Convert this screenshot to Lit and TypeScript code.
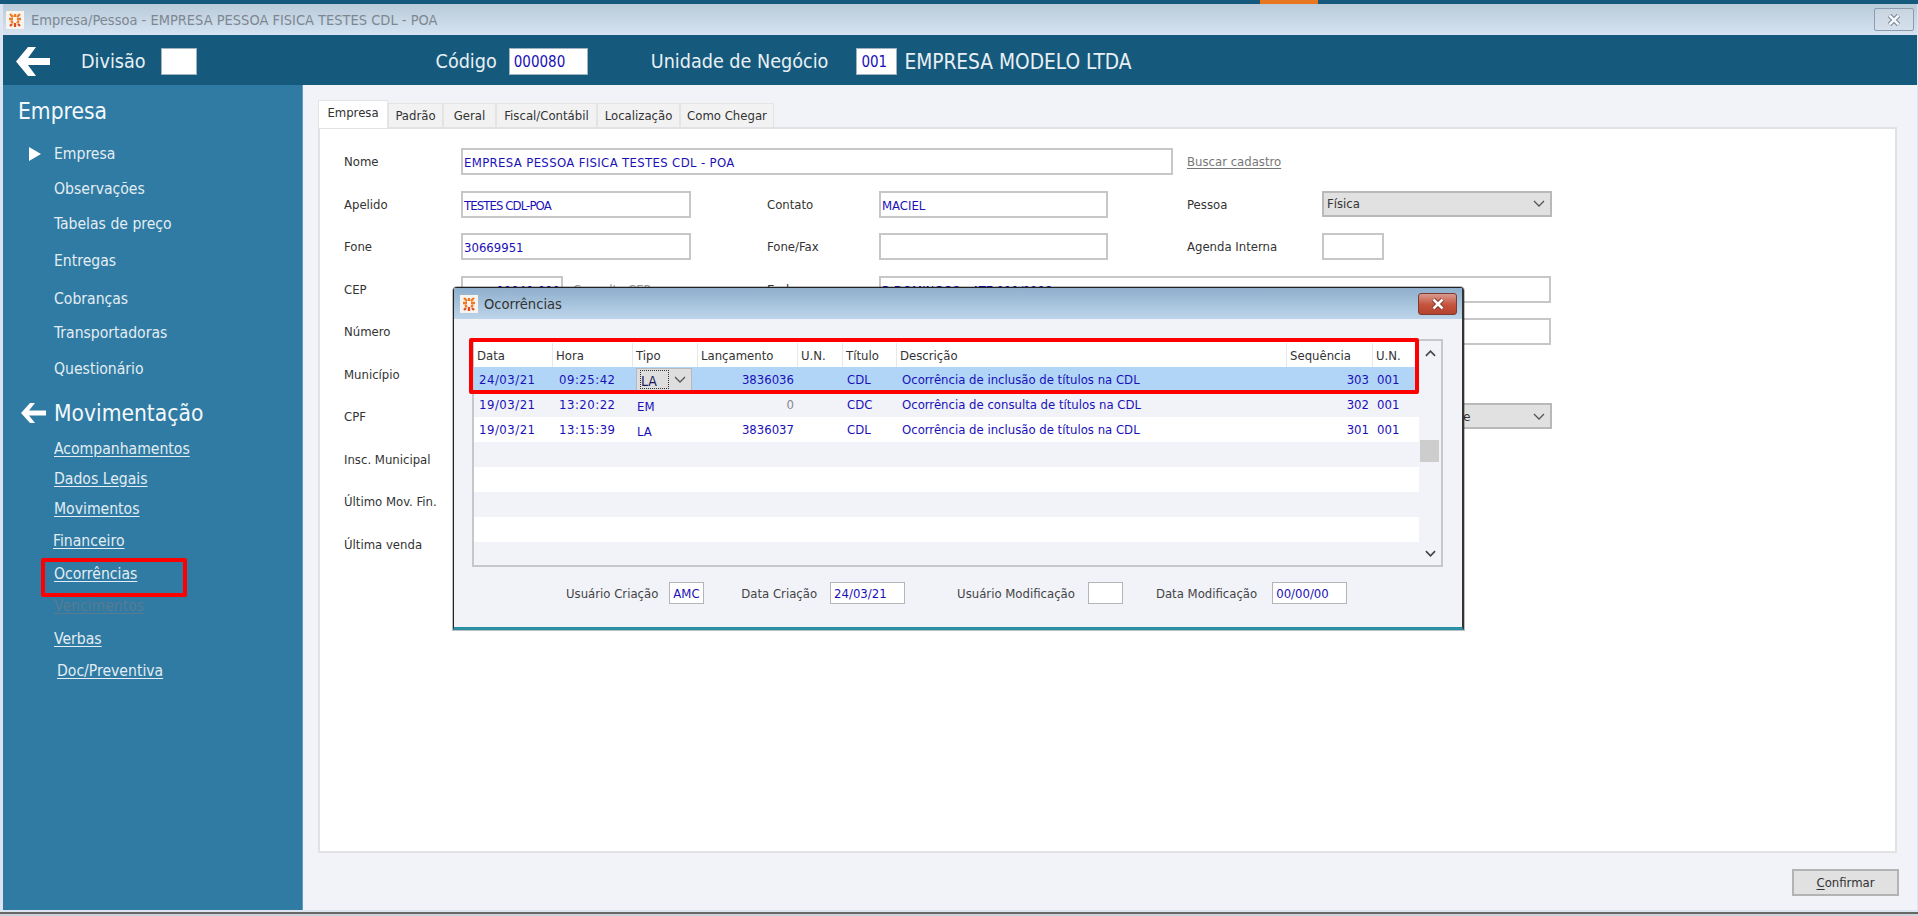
import { LitElement, html, css, svg } from "lit";
import { customElement } from "lit/decorators.js";

// small orange company mark used in both title bars
const appIcon = svg`<svg viewBox="0 0 18 18" width="18" height="18">
  <rect width="18" height="18" fill="#f7f3ee"/>
  <path d="M4 3l3 3M9 3v3M14 3l-3 3M3 8h4M11 8h4M5 10l2 2M13 10l-2 2" stroke="#ee7a26" stroke-width="2.3" fill="none"/>
  <path d="M4 15l2-2M9 12v4M14 15l-2-2" stroke="#dc4f1c" stroke-width="2.3" fill="none"/>
</svg>`;

const chevronDown = svg`<svg viewBox="0 0 12 7" width="12" height="7"><path d="M1 1l5 5 5-5" fill="none" stroke="#555" stroke-width="1.3"/></svg>`;

const closeX = (color: string, edge: string) => svg`<svg viewBox="0 0 14 12" width="14" height="12">
  <path d="M2.5 1.5l9 9M11.5 1.5l-9 9" stroke="${edge}" stroke-width="4.4" fill="none"/>
  <path d="M2.5 1.5l9 9M11.5 1.5l-9 9" stroke="${color}" stroke-width="2.6" fill="none"/>
</svg>`;

const bigArrow = svg`<svg viewBox="0 0 34 29" width="34" height="29"><path d="M12 0h8L12 11h22v7H12l8 11h-8L0 14.5z" fill="#fff"/></svg>`;
const smallArrow = svg`<svg viewBox="0 0 25 20" width="25" height="20"><path d="M9 0h5L8 7.5h17v5H8l6 7.5H9L0 10z" fill="#fff"/></svg>`;
const playArrow = svg`<svg viewBox="0 0 12 14" width="12" height="14"><path d="M0 0l12 7-12 7z" fill="#fff"/></svg>`;

// label, gap above the item
const TOP_MENU: [string, number][] = [
  ["Observações", 15],
  ["Tabelas de preço", 15],
  ["Entregas", 17],
  ["Cobranças", 18],
  ["Transportadoras", 14],
  ["Questionário", 16],
];

// label, gap above, left offset
const LINK_MENU: [string, number, number, string][] = [
  ["Acompanhamentos", 11, 51, ""],
  ["Dados Legais", 10, 51, ""],
  ["Movimentos", 10, 51, ""],
  ["Financeiro", 12, 50, ""],
  ["Ocorrências", 13, 51, ""],
  ["Vencimentos", 12, 51, "off"],
  ["Verbas", 13, 51, ""],
  ["Doc/Preventiva", 12, 54, ""],
];

const COLUMNS = [
  { title: "Data", w: 79 },
  { title: "Hora", w: 80 },
  { title: "Tipo", w: 65 },
  { title: "Lançamento", w: 100 },
  { title: "U.N.", w: 45 },
  { title: "Título", w: 54 },
  { title: "Descrição", w: 390 },
  { title: "Sequência", w: 86 },
  { title: "U.N.", w: 46 },
];

const ROWS = [
  ["24/03/21", "09:25:42", "LA", "3836036", "", "CDL", "Ocorrência de inclusão de títulos na CDL", "303", "001"],
  ["19/03/21", "13:20:22", "EM", "0", "", "CDC", "Ocorrência de consulta de títulos na CDL", "302", "001"],
  ["19/03/21", "13:15:39", "LA", "3836037", "", "CDL", "Ocorrência de inclusão de títulos na CDL", "301", "001"],
  [], [], [], [], [],
];

@customElement("app-root")
export class AppRoot extends LitElement {
  static styles = css`
    :host {
      display: block;
      width: 1918px;
      height: 916px;
      overflow: hidden;
      position: relative;
      font-family: "DejaVu Sans", "Noto Sans", sans-serif;
      font-stretch: condensed;
      font-size: 13px;
      color: #333;
      background: #ccd2d8;
    }
    .strip { height: 4px; background: #155a7c; display: flex; }
    .strip i { width: 58px; background: #e8761e; margin-left: 1260px; }
    .window {
      height: 910px;
      box-sizing: border-box;
      padding: 0 1px 2px 3px;
      display: flex;
      flex-direction: column;
      background: #dce5f0;
      border-bottom: 2px solid #666;
    }
    .titlebar {
      height: 31px;
      flex: none;
      display: flex;
      align-items: center;
      gap: 7px;
      padding-left: 3px;
      background: linear-gradient(#b9cad9, #d6e4f2);
      color: #7d8790;
      font-size: 14.5px;
    }
    .titlebar .close {
      margin-left: auto;
      margin-right: 3px;
      width: 40px;
      height: 23px;
      box-sizing: border-box;
      border: 1px solid #8b9bb0;
      border-radius: 2px;
      display: flex;
      align-items: center;
      justify-content: center;
      background: linear-gradient(#c8d4e0, #d5e0ec);
    }
    .header {
      height: 50px;
      flex: none;
      box-sizing: border-box;
      padding: 3px 0 0 13px;
      background: #155a7c;
      color: #e9f0f5;
      font-size: 19.6px;
      display: flex;
      align-items: center;
    }
    .hbox {
      height: 27px;
      box-sizing: border-box;
      background: #fff;
      border: 1px solid #9fb2bf;
      color: #1a10b8;
      font-size: 15px;
      padding-left: 4px;
      display: flex;
      align-items: center;
      flex: none;
    }
    .hbox.div { width: 36px; margin-left: 15px; }
    .hbox.cod { width: 79px; margin-left: 12px; }
    .hbox.un { width: 41px; margin-left: 28px; }
    .l-div { margin-left: 31px; }
    .l-cod { margin-left: 239px; }
    .l-un { margin-left: 63px; }
    .company { margin-left: 7px; font-size: 20.7px; }
    .body { flex: 1; display: flex; min-height: 0; }
    .side {
      width: 299px;
      flex: none;
      box-sizing: content-box;
      padding-top: 11px;
      background: #2f7ba3;
      color: #e3edf3;
      font-size: 15.6px;
      border-right: 1px solid #5f9dbd;
    }
    .side h2 {
      margin: 0;
      font-weight: 400;
      font-size: 22.6px;
      line-height: 30px;
      color: #f4f8fb;
      display: flex;
      align-items: center;
    }
    .side h2.first { padding-left: 15px; }
    .side h2.second { padding-left: 18px; gap: 8px; margin-top: 19px; }
    .item { line-height: 20px; white-space: nowrap; padding-left: 51px; }
    .item.current { display: flex; align-items: center; padding-left: 26px; gap: 13px; margin-top: 18px; }
    .side a { display: block; line-height: 20px; white-space: nowrap; }
    .side a span { text-decoration: underline; text-underline-offset: 2px; }
    .side a.off { color: #587a93; }
    .main {
      flex: 1;
      background: #f1f3f9;
      display: flex;
      flex-direction: column;
      padding: 15px 16px 0 15px;
    }
    .tabs { display: flex; height: 27px; align-items: flex-end; font-size: 13px; }
    .tab {
      height: 24px;
      box-sizing: border-box;
      background: #f2f2f2;
      border: 1px solid #e4e4e4;
      border-bottom: none;
      display: flex;
      align-items: center;
      justify-content: center;
      color: #333;
    }
    .tab.on {
      height: 28px;
      margin-bottom: -1px;
      background: #fff;
      position: relative;
      padding-bottom: 5px;
      z-index: 1;
    }
    .panel {
      width: 1579px;
      height: 726px;
      flex: none;
      box-sizing: border-box;
      background: #fff;
      border: 2px solid #e2e2e4;
    }
    .form { padding: 19px 0 0 24px; font-size: 13px; color: #333; }
    .row {
      display: grid;
      grid-template-columns: 117px 230px 76px 112px 229px 79px 135px 230px;
      height: 42.5px;
    }
    .lb { display: flex; align-items: center; height: 27px; white-space: nowrap; }
    .fld {
      height: 27px;
      box-sizing: border-box;
      border: 2px solid #c7c7c9;
      background: #fff;
      color: #1a10b8;
      padding: 2px 0 0 1px;
      display: flex;
      align-items: center;
      font-size: 13px;
      white-space: nowrap;
      overflow: hidden;
    }
    .fld.nome { grid-column: 2 / span 5; width: 712px; letter-spacing: 0.35px; }
    .fld.squeeze { letter-spacing: -0.9px; }
    .fld.short { width: 62px; }
    .fld.end { grid-column: 5 / span 4; width: 672px; }
    .fld.cep { width: 102px; justify-content: flex-end; padding-right: 1px; }
    .cepcell { display: flex; gap: 10px; }
    .sel {
      height: 26px;
      box-sizing: border-box;
      border: 2px solid #b9b9b9;
      background: #e1e1e1;
      display: flex;
      align-items: center;
      justify-content: space-between;
      padding: 0 5px 0 3px;
      color: #333;
    }
    .sel.end { grid-column: 8; letter-spacing: -0.15px; }
    .link {
      color: #777;
      text-decoration: underline;
      text-underline-offset: 2px;
      display: flex;
      align-items: center;
      height: 27px;
      white-space: nowrap;
    }
    .link.plain { color: #999; text-decoration: none; }
    .btnrow { display: flex; justify-content: flex-end; margin: 16px 2px 0 0; }
    .btn {
      width: 107px;
      height: 27px;
      box-sizing: border-box;
      border: 2px solid #b3b3b3;
      background: #e1e1e1;
      display: flex;
      align-items: center;
      justify-content: center;
      color: #333;
    }
    .btn u { text-underline-offset: 2px; }

    /* modal sits over the form */
    .dialog {
      position: absolute;
      left: 453px;
      top: 287px;
      width: 1011px;
      height: 343px;
      box-sizing: border-box;
      border: 1px solid #222;
      border-bottom: 3px solid #2b8fa5;
      border-right: 2px solid #333;
      border-radius: 4px 4px 0 0;
      background: #f1f3f9;
      display: flex;
      flex-direction: column;
      box-shadow: 0 0 0 1px rgba(0,0,0,.25);
    }
    .dtitle {
      height: 31px;
      flex: none;
      background: linear-gradient(#8fafcd, #bdd5ea);
      display: flex;
      align-items: center;
      padding: 0 5px 0 6px;
      gap: 6px;
      color: #333;
      font-size: 14.6px;
    }
    .dtitle .close {
      margin-left: auto;
      width: 39px;
      height: 22px;
      box-sizing: border-box;
      border: 1px solid #7a3b35;
      border-radius: 3px;
      display: flex;
      align-items: center;
      justify-content: center;
      background: linear-gradient(#d99a8d, #c4523c 55%, #b5442f);
    }
    .grid {
      margin: 20px 0 0 18px;
      width: 971px;
      height: 228px;
      flex: none;
      box-sizing: border-box;
      border: 2px solid #c4c7cb;
      display: flex;
      background: #fff;
    }
    .list { width: 945px; flex: none; overflow: hidden; }
    .ghead {
      display: flex;
      height: 24px;
      margin-top: 2px;
      background: #fff;
      font-size: 13px;
    }
    .ghead div {
      box-sizing: border-box;
      padding-left: 3px;
      border-right: 1px solid #e6e8ee;
      display: flex;
      align-items: center;
      white-space: nowrap;
    }
    .grow { display: flex; height: 25px; color: #1a10b8; font-size: 13px; white-space: nowrap; }
    .grow:nth-child(even) { background: #f1f3f9; }
    .grow:nth-child(odd) { background: #fff; }
    .grow.sel-row { background: #b0d5f7; }
    .grow > div { box-sizing: border-box; padding: 0 4px 1px; display: flex; align-items: center; }
    .grow > .plain-cell { padding: 0; }
    .grow > .desc { padding-left: 5px; }
    .grow > .right { justify-content: flex-end; }
    .grow > .zero { color: #888; }
    .grow > .stamp { padding-left: 5px; letter-spacing: 0.5px; }
    .grow > .stamp.time { padding-left: 6px; }
    .grow > .kind { padding-top: 3px; padding-bottom: 0; }
    .combo {
      margin: 0 0 0 3px;
      width: 56px;
      height: 24px;
      box-sizing: border-box;
      background: #dedede;
      border: 1px solid #b9b9b9;
      display: flex;
      align-items: center;
      justify-content: space-between;
      padding: 0 5px 0 3px;
      color: #1a1a5a;
    }
    .combo b {
      font-weight: 400;
      font-size: 14px;
      border: 1px dotted #333;
      width: 29px;
      height: 19px;
      box-sizing: border-box;
      display: flex;
      align-items: center;
      padding-top: 3px;
    }
    .scroll {
      flex: 1;
      background: #f1f3f9;
      position: relative;
      display: flex;
      flex-direction: column;
      align-items: center;
      justify-content: space-between;
      padding: 9px 0 8px;
    }
    .thumb {
      position: absolute;
      left: 1px;
      top: 99px;
      width: 19px;
      height: 22px;
      background: #cdcdcd;
    }
    .foot {
      display: flex;
      align-items: center;
      height: 22px;
      margin-top: 15px;
      padding-left: 112px;
      font-size: 13px;
      color: #444;
      white-space: nowrap;
    }
    .box {
      height: 22px;
      box-sizing: border-box;
      border: 1px solid #b5b5b8;
      background: #fff;
      color: #1a10b8;
      padding-left: 3px;
      display: flex;
      align-items: center;
      flex: none;
    }
    .box.small { width: 35px; }
    .box.date { width: 75px; }
    .g1 { margin: 0 37px 0 11px; }
    .g2 { margin: 0 52px 0 13px; }
    .g3 { margin: 0 33px 0 13px; }
    .g4 { margin-left: 15px; }
    .mark { position: absolute; border: 4px solid #f00; box-sizing: border-box; border-radius: 2px; }
    .mark.nav { left: 41px; top: 558px; width: 146px; height: 39px; }
    .mark.tbl { left: 469px; top: 338px; width: 950px; height: 56px; }
  `;

  private renderSide() {
    return html`<div class="side">
      <h2 class="first">Empresa</h2>
      <div class="item current">${playArrow}<span>Empresa</span></div>
      ${TOP_MENU.map(([t, gap]) => html`<div class="item" style="margin-top:${gap}px">${t}</div>`)}
      <h2 class="second">${smallArrow}<span>Movimentação</span></h2>
      ${LINK_MENU.map(
        ([t, gap, x, c]) =>
          html`<a class=${c} style="margin-top:${gap}px;padding-left:${x}px"><span>${t}</span></a>`
      )}
    </div>`;
  }

  private renderForm() {
    return html`<div class="form">
      <div class="row">
        <div class="lb">Nome</div>
        <div class="fld nome">EMPRESA PESSOA FISICA TESTES CDL - POA</div>
        <div class="link">Buscar cadastro</div>
      </div>
      <div class="row">
        <div class="lb">Apelido</div><div class="fld squeeze">TESTES CDL-POA</div><div></div>
        <div class="lb">Contato</div><div class="fld">MACIEL</div><div></div>
        <div class="lb">Pessoa</div><div class="sel">Física ${chevronDown}</div>
      </div>
      <div class="row">
        <div class="lb">Fone</div><div class="fld">30669951</div><div></div>
        <div class="lb">Fone/Fax</div><div class="fld"></div><div></div>
        <div class="lb">Agenda Interna</div><div class="fld short"></div>
      </div>
      <div class="row">
        <div class="lb">CEP</div>
        <div class="cepcell">
          <div class="fld cep">00040-000</div>
          <div class="link plain">Consulta CEP</div>
        </div>
        <div></div>
        <div class="lb">Ender.</div>
        <div class="fld end">R DOMINGOS - ATE 111/1112</div>
      </div>
      <div class="row">
        <div class="lb">Número</div>
        <div class="fld end"></div>
      </div>
      <div class="row"><div class="lb">Município</div></div>
      <div class="row">
        <div class="lb">CPF</div>
        <div class="sel end">Isento - Não Contribuinte ${chevronDown}</div>
      </div>
      <div class="row"><div class="lb">Insc. Municipal</div></div>
      <div class="row"><div class="lb">Último Mov. Fin.</div></div>
      <div class="row"><div class="lb">Última venda</div></div>
    </div>`;
  }

  private renderDialog() {
    return html`<div class="dialog">
      <div class="dtitle">${appIcon}<span>Ocorrências</span>
        <div class="close">${closeX("#fff", "#7d2b20")}</div>
      </div>
      <div class="grid">
        <div class="list">
          <div class="ghead">
            ${COLUMNS.map((c) => html`<div style="width:${c.w}px">${c.title}</div>`)}
          </div>
          <div>
            ${ROWS.map(
              (r, i) => html`<div class="grow ${i === 0 ? "sel-row" : ""}">
                ${COLUMNS.map((c, j) => this.renderCell(r, i, j, c.w))}
              </div>`
            )}
          </div>
        </div>
        <div class="scroll">
          <svg viewBox="0 0 12 7" width="11" height="7"><path d="M1 6l5-5 5 5" fill="none" stroke="#444" stroke-width="1.8"/></svg>
          <div class="thumb"></div>
          <svg viewBox="0 0 12 7" width="11" height="7"><path d="M1 1l5 5 5-5" fill="none" stroke="#444" stroke-width="1.8"/></svg>
        </div>
      </div>
      <div class="foot">
        <span>Usuário Criação</span><div class="box small g1">AMC</div>
        <span>Data Criação</span><div class="box date g2">24/03/21</div>
        <span>Usuário Modificação</span><div class="box small g3"></div>
        <span>Data Modificação</span><div class="box date g4">00/00/00</div>
      </div>
    </div>`;
  }

  private renderCell(r: string[], i: number, j: number, w: number) {
    const v = r[j] ?? "";
    if (i === 0 && j === 2) {
      return html`<div class="plain-cell" style="width:${w}px">
        <div class="combo"><b>LA</b>${chevronDown}</div>
      </div>`;
    }
    const cls = [
      j === 0 ? "stamp" : "",
      j === 1 ? "stamp time" : "",
      j === 2 ? "kind" : "",
      j === 3 || j === 7 ? "right" : "",
      j === 3 && v === "0" ? "zero" : "",
      j === 6 ? "desc" : "",
    ].join(" ");
    return html`<div class=${cls} style="width:${w}px">${v}</div>`;
  }

  render() {
    return html`
      <div class="strip"><i></i></div>
      <div class="window">
        <div class="titlebar">
          ${appIcon}<span>Empresa/Pessoa - EMPRESA PESSOA FISICA TESTES CDL - POA</span>
          <div class="close">${closeX("#f4f7fa", "#5f6f80")}</div>
        </div>
        <div class="header">
          ${bigArrow}
          <span class="l-div">Divisão</span>
          <div class="hbox div"></div>
          <span class="l-cod">Código</span>
          <div class="hbox cod">000080</div>
          <span class="l-un">Unidade de Negócio</span>
          <div class="hbox un">001</div>
          <span class="company">EMPRESA MODELO LTDA</span>
        </div>
        <div class="body">
          ${this.renderSide()}
          <div class="main">
            <div class="tabs">
              <div class="tab on" style="width:70px">Empresa</div>
              <div class="tab" style="width:55px">Padrão</div>
              <div class="tab" style="width:53px">Geral</div>
              <div class="tab" style="width:101px">Fiscal/Contábil</div>
              <div class="tab" style="width:83px">Localização</div>
              <div class="tab" style="width:94px">Como Chegar</div>
            </div>
            <div class="panel">${this.renderForm()}</div>
            <div class="btnrow"><div class="btn"><span><u>C</u>onfirmar</span></div></div>
          </div>
        </div>
      </div>
      ${this.renderDialog()}
      <div class="mark nav"></div>
      <div class="mark tbl"></div>
    `;
  }
}
